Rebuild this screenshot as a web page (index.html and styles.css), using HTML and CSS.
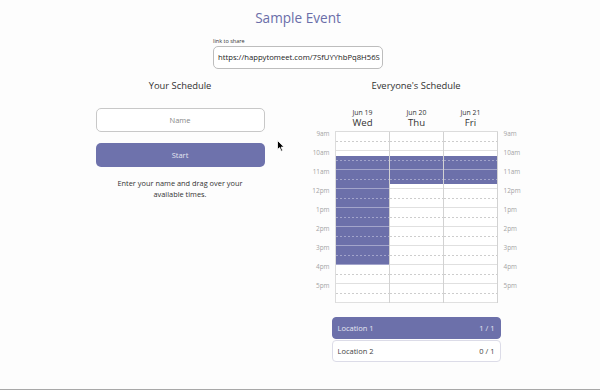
FILE: index.html
```html
<!DOCTYPE html>
<html>
<head>
<meta charset="utf-8">
<title>Sample Event</title>
<link rel="stylesheet" href="styles.css">
</head>
<body>
<div class="page">
  <h1 class="title">Sample Event</h1>
  <div class="share">
    <span class="share-label">link to share</span>
    <div class="share-box">https://happytomeet.com/7SfUYYhbPq8H56S</div>
  </div>
  <div class="cols">
    <section class="col">
      <h2>Your Schedule</h2>
      <div class="name-input">Name</div>
      <div class="start">Start</div>
      <p class="hint">Enter your name and drag over your<br>available times.</p>
    </section>
    <section class="col">
      <h2>Everyone's Schedule</h2>
      <div class="sched">
        <div class="heads">
          <div class="head"><span class="date">Jun 19</span><span class="dow">Wed</span></div>
          <div class="head"><span class="date">Jun 20</span><span class="dow">Thu</span></div>
          <div class="head"><span class="date">Jun 21</span><span class="dow">Fri</span></div>
        </div>
        <div class="times times-l">
          <span>9am</span><span>10am</span><span>11am</span><span>12pm</span><span>1pm</span><span>2pm</span><span>3pm</span><span>4pm</span><span>5pm</span>
        </div>
        <div class="grid">
          <div class="day">
            <i class="s"></i><i class="s"></i><i class="s"></i><i class="s"></i>
            <i class="s"></i><i class="s on"></i><i class="s on"></i><i class="s on"></i>
            <i class="s on"></i><i class="s on"></i><i class="s on"></i><i class="s on"></i>
            <i class="s on"></i><i class="s on"></i><i class="s on"></i><i class="s on"></i>
            <i class="s on"></i><i class="s on"></i><i class="s on"></i><i class="s on"></i>
            <i class="s on"></i><i class="s on"></i><i class="s on"></i><i class="s on"></i>
            <i class="s on"></i><i class="s on"></i><i class="s on"></i><i class="s on"></i>
            <i class="s"></i><i class="s"></i><i class="s"></i><i class="s"></i>
            <i class="s"></i><i class="s"></i><i class="s"></i><i class="s"></i>
          </div>
          <div class="day">
            <i class="s"></i><i class="s"></i><i class="s"></i><i class="s"></i>
            <i class="s"></i><i class="s on"></i><i class="s on"></i><i class="s on"></i>
            <i class="s on"></i><i class="s on"></i><i class="s on"></i><i class="s"></i>
            <i class="s"></i><i class="s"></i><i class="s"></i><i class="s"></i>
            <i class="s"></i><i class="s"></i><i class="s"></i><i class="s"></i>
            <i class="s"></i><i class="s"></i><i class="s"></i><i class="s"></i>
            <i class="s"></i><i class="s"></i><i class="s"></i><i class="s"></i>
            <i class="s"></i><i class="s"></i><i class="s"></i><i class="s"></i>
            <i class="s"></i><i class="s"></i><i class="s"></i><i class="s"></i>
          </div>
          <div class="day">
            <i class="s"></i><i class="s"></i><i class="s"></i><i class="s"></i>
            <i class="s"></i><i class="s on"></i><i class="s on"></i><i class="s on"></i>
            <i class="s on"></i><i class="s on"></i><i class="s on"></i><i class="s"></i>
            <i class="s"></i><i class="s"></i><i class="s"></i><i class="s"></i>
            <i class="s"></i><i class="s"></i><i class="s"></i><i class="s"></i>
            <i class="s"></i><i class="s"></i><i class="s"></i><i class="s"></i>
            <i class="s"></i><i class="s"></i><i class="s"></i><i class="s"></i>
            <i class="s"></i><i class="s"></i><i class="s"></i><i class="s"></i>
            <i class="s"></i><i class="s"></i><i class="s"></i><i class="s"></i>
          </div>
        </div>
        <div class="times times-r">
          <span>9am</span><span>10am</span><span>11am</span><span>12pm</span><span>1pm</span><span>2pm</span><span>3pm</span><span>4pm</span><span>5pm</span>
        </div>
      </div>
      <div class="locations">
        <div class="loc loc-active"><span>Location 1</span><span>1 / 1</span></div>
        <div class="loc"><span>Location 2</span><span>0 / 1</span></div>
      </div>
    </section>
  </div>
</div>
<svg class="cursor" width="8" height="12" viewBox="0 0 8 12"><path d="M0.5 0.5 L0.5 9.5 L2.6 7.6 L4.2 11.2 L5.6 10.6 L4.1 7.1 L7 7.1 Z" fill="#000" stroke="#fff" stroke-width="0.8" stroke-linejoin="round"/></svg>
</body>
</html>
```

FILE: styles.css
```css
* { box-sizing: border-box; margin: 0; padding: 0; }
html, body { height: 390px; }
body {
  background: #fdfdfd;
  font-family: "Open Sans", "Noto Sans", sans-serif;
  color: #333;
  border-bottom: 1px solid #a8a8a8;
  overflow: hidden;
  position: relative;
}
.page {
  width: 472px;
  margin-left: 62px;
  display: flex;
  flex-direction: column;
  align-items: center;
}
.title {
  margin-top: 9px;
  font-size: 13.6px;
  line-height: 18px;
  font-weight: 400;
  color: #6a6ea9;
}
.share {
  margin-top: 11px;
  display: flex;
  flex-direction: column;
  width: 170px;
}
.share-label {
  font-size: 5.5px;
  line-height: 7px;
  color: #333;
}
.share-box {
  margin-top: 1px;
  height: 23px;
  border: 1px solid #bdbdbd;
  border-radius: 5px;
  background: #fff;
  font-size: 7.7px;
  line-height: 21px;
  padding-left: 4px;
  white-space: nowrap;
  overflow: hidden;
  color: #222;
}
.cols {
  margin-top: 10px;
  display: flex;
  width: 100%;
}
.col {
  width: 236px;
  display: flex;
  flex-direction: column;
  align-items: center;
}
h2 {
  font-size: 9.4px;
  line-height: 14px;
  font-weight: 400;
  color: #333;
}
.name-input {
  margin-top: 15px;
  width: 169px;
  height: 24px;
  border: 1px solid #c8c8c8;
  border-radius: 5px;
  background: #fff;
  font-size: 7.5px;
  color: #888;
  display: flex;
  align-items: center;
  justify-content: center;
}
.start {
  margin-top: 11px;
  width: 169px;
  height: 24px;
  border-radius: 5px;
  background: #6e72ac;
  font-size: 7.5px;
  color: #e4e5f0;
  display: flex;
  align-items: center;
  justify-content: center;
}
.hint {
  margin-top: 10.5px;
  font-size: 7.4px;
  line-height: 11.7px;
  text-align: center;
  color: #333;
}
.sched {
  margin-top: 15px;
  display: grid;
  grid-template-columns: 34px 163px 34px;
  grid-template-rows: auto auto;
}
.heads {
  grid-column: 2;
  grid-row: 1;
  display: flex;
  padding-left: 1px;
  padding-bottom: 3px;
}
.head {
  width: 54px;
  display: flex;
  flex-direction: column;
  align-items: center;
}
.date {
  font-size: 6.9px;
  line-height: 9px;
  color: #333;
}
.dow {
  font-size: 9.6px;
  line-height: 11px;
  color: #333;
}
.times {
  grid-row: 2;
  display: flex;
  flex-direction: column;
  margin-top: -1px;
}
.times span {
  height: 19px;
  font-size: 6.4px;
  line-height: 8px;
  color: #a4a4a4;
}
.times-l { grid-column: 1; text-align: right; padding-right: 5px; }
.times-r { grid-column: 3; text-align: left; padding-left: 6px; }
.grid {
  grid-column: 2;
  grid-row: 2;
  display: flex;
  border-top: 1px solid #dcdcdc;
  border-left: 1px solid #dcdcdc;
  background: #fff;
}
.day {
  width: 54px;
  border-right: 1px solid #d2d2d2;
  display: flex;
  flex-direction: column;
}
.s {
  display: block;
  height: 4.75px;
}
.s:nth-child(4n) { border-bottom: 1px solid #e0e0e0; }
.s:nth-child(4n+2) {
  background-image: linear-gradient(to right, #cdcdcd 50%, transparent 50%);
  background-size: 4px 1px;
  background-repeat: repeat-x;
  background-position: left bottom;
}
.s.on { background-color: #6c70aa; }
.s.on:nth-child(4n) { border-bottom-color: #a3a5cb; }
.s.on:nth-child(4n+2) {
  background-image: linear-gradient(to right, #a2a4cb 50%, transparent 50%);
}
.locations {
  margin-top: 14px;
  width: 169px;
  display: flex;
  flex-direction: column;
  gap: 1px;
}
.loc {
  height: 22px;
  border: 1px solid #dcdce8;
  border-radius: 4px;
  background: #fff;
  display: flex;
  align-items: center;
  justify-content: space-between;
  padding: 0 5px;
  font-size: 7.5px;
  color: #444;
}
.loc-active {
  background: #6c70aa;
  border-color: #6c70aa;
  color: #e6e7f2;
}
.cursor {
  position: absolute;
  left: 277px;
  top: 140px;
}
```
